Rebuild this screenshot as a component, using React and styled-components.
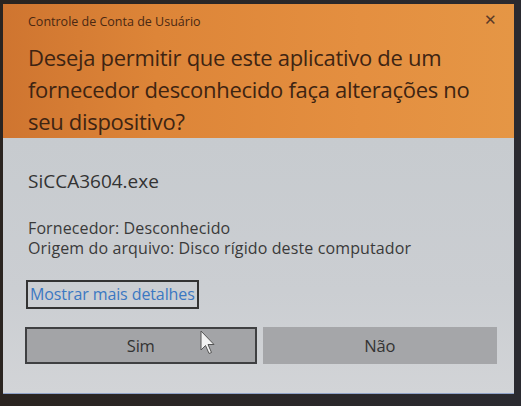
import styled, { createGlobalStyle } from "styled-components";

const GlobalStyle = createGlobalStyle`
    html, body {
        margin: 0;
        padding: 0;
        background: #1b2030;
        font-family: "Open Sans", "Noto Sans", sans-serif;
    }
`;

const Screen = styled.div`
    width: 521px;
    height: 406px;
    padding: 4px 7px 0 3px;
    box-sizing: border-box;
    background: linear-gradient(90deg, #2a2420 0%, #2a2a30 100%);
    overflow: hidden;
`;

const Dialog = styled.div`
    position: relative;
    height: 389px;
    display: flex;
    flex-direction: column;
    border-bottom: 1px solid #8fa2c8;
`;

const Header = styled.div`
    height: 134px;
    padding: 0 17px 0 25px;
    background: linear-gradient(90deg, #cf7530 0%, #dd8538 30%, #e48f40 70%, #e59645 100%);
    color: #3e2412;
`;

const TitleRow = styled.div`
    height: 35px;
    display: flex;
    align-items: center;
    justify-content: space-between;
`;

const WindowTitle = styled.span`
    font-size: 12.5px;
    color: #4a2812;
`;

const Close = styled.span`
    font-size: 15px;
    line-height: 1;
    color: #5a3a28;
    margin-top: -4px;
`;

const Question = styled.h1`
    margin: 2px 0 0;
    font-size: 22px;
    font-weight: 400;
    line-height: 32px;
    letter-spacing: -0.3px;
    white-space: nowrap;
`;

const Body = styled.div`
    flex: 1;
    padding: 31px 17px 0 22px;
    background: linear-gradient(180deg, #c7cbcf 0%, #cbced2 60%, #d2d4d7 100%);
    color: #333;
`;

const FileName = styled.div`
    font-size: 19px;
    line-height: 24px;
    letter-spacing: 0;
    padding-left: 3px;
`;

const Details = styled.div`
    margin-top: 25px;
    padding-left: 3px;
`;

const DetailLine = styled.div`
    font-size: 16px;
    line-height: 20px;
    letter-spacing: 0.12px;
    color: #3a3a3a;
`;

const MoreLink = styled.a`
    display: inline-block;
    margin-top: 22px;
    height: 29px;
    box-sizing: border-box;
    padding: 0 2px;
    margin-left: 1px;
    border: 2px solid #333;
    color: #3b78c2;
    font-size: 16px;
    line-height: 24px;
    letter-spacing: -0.1px;
    text-decoration: none;
`;

const Buttons = styled.div`
    display: flex;
    gap: 6px;
    margin-top: 18px;
`;

const Button = styled.button`
    height: 37px;
    box-sizing: border-box;
    border: 2px solid ${(p) => (p.$focused ? "#3f4042" : "transparent")};
    background: ${(p) => (p.$focused ? "#a3a4a7" : "#a5a6a9")};
    color: #333;
    font-family: inherit;
    font-size: 16.5px;
    letter-spacing: -0.2px;
    width: ${(p) => p.$w}px;
    padding: 0;
`;

const Cursor = styled.svg`
    position: absolute;
    left: 197px;
    top: 326px;
`;

const App = () => {
    return (
        <Screen>
            <GlobalStyle />
            <Dialog>
                <Header>
                    <TitleRow>
                        <WindowTitle>Controle de Conta de Usuário</WindowTitle>
                        <Close>✕</Close>
                    </TitleRow>
                    <Question>
                        Deseja permitir que este aplicativo de um
                        <br />
                        fornecedor desconhecido faça alterações no
                        <br />
                        seu dispositivo?
                    </Question>
                </Header>
                <Body>
                    <FileName>SiCCA3604.exe</FileName>
                    <Details>
                        <DetailLine>Fornecedor: Desconhecido</DetailLine>
                        <DetailLine>Origem do arquivo: Disco rígido deste computador</DetailLine>
                    </Details>
                    <MoreLink href="#">Mostrar mais detalhes</MoreLink>
                    <Buttons>
                        <Button $focused $w={232}>Sim</Button>
                        <Button $w={235}>Não</Button>
                    </Buttons>
                </Body>
                <Cursor width="16" height="26" viewBox="0 0 16 26">
                    <path
                        d="M1 1 L1 20 L5.5 15.5 L9 23.5 L11.5 22.5 L8 14.5 L14 14.5 Z"
                        fill="#f2f2f2"
                        stroke="#555"
                        strokeWidth="1"
                        strokeLinejoin="round"
                    />
                </Cursor>
            </Dialog>
        </Screen>
    );
};

export default App;
